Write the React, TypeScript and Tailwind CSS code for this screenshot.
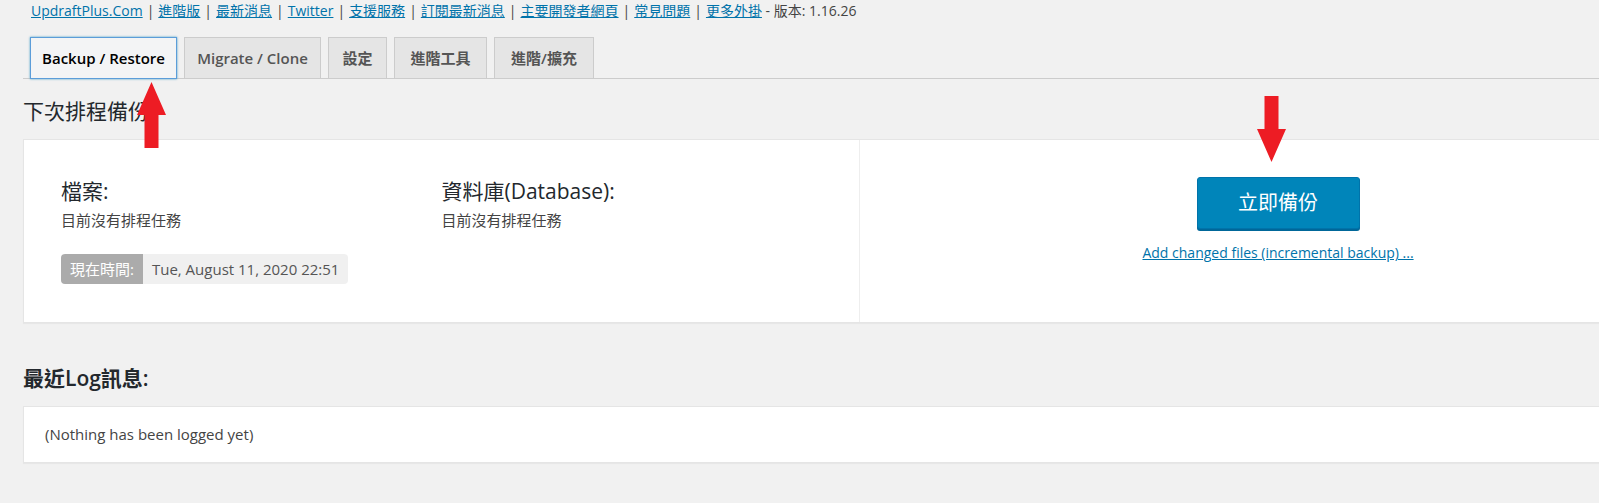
const FONT = "font-['Open_Sans','Noto_Sans_CJK_TC',sans-serif]";

const topLinks = [
  "UpdraftPlus.Com",
  "進階版",
  "最新消息",
  "Twitter",
  "支援服務",
  "訂閱最新消息",
  "主要開發者網頁",
  "常見問題",
  "更多外掛",
];

const tabs = [
  { label: "Backup / Restore", w: "w-[147px]", active: true },
  { label: "Migrate / Clone", w: "w-[137px]" },
  { label: "設定", w: "w-[59px]" },
  { label: "進階工具", w: "w-[93px]" },
  { label: "進階/擴充", w: "w-[100px]" },
];

function RedArrow({ up, className }: { up?: boolean; className: string }) {
  // 29 wide, shaft 15 wide, head 34 tall
  return (
    <svg
      className={className}
      width="29"
      height="66"
      viewBox="0 0 29 66"
      style={up ? undefined : { transform: "rotate(180deg)" }}
    >
      <path d="M14.5 0 L29 33 L21.5 33 L21.5 66 L7.5 66 L7.5 33 L0 33 Z" fill="#ed1c24" />
    </svg>
  );
}

export default function App() {
  return (
    <div className={`relative min-h-screen overflow-hidden bg-[#f1f1f1] text-[#444] ${FONT}`}>
      {/* plugin links */}
      <div className="pl-[31px] pt-0 text-[14px] leading-[22px] whitespace-nowrap">
        {topLinks.map((l, i) => (
          <span key={l}>
            {i > 0 && <span className="mx-[4px]">|</span>}
            <a href="#" className="text-[#0073aa] underline">
              {l}
            </a>
          </span>
        ))}
        <span> - 版本: 1.16.26</span>
      </div>

      {/* tabs */}
      <div className="mt-[15px] ml-[23px] flex gap-[7px] border-b border-[#ccc] pl-[7px]">
        {tabs.map((t) => (
          <div
            key={t.label}
            className={`-mb-px flex h-[42px] items-center justify-center border text-[15px] font-semibold ${t.w} ${
              t.active
                ? "border-[#5b9dd9] bg-[#f3f4f5] text-[#000] shadow-[0_0_2px_rgba(30,140,190,0.8)]"
                : "border-[#ccc] bg-[#e5e5e5] text-[#555]"
            }`}
          >
            {t.label}
          </div>
        ))}
      </div>

      <h2 className="mt-[17px] ml-[23px] text-[21px] leading-[30px] text-[#23282d]">下次排程備份</h2>

      {/* next scheduled backups */}
      <div className="mt-[13px] ml-[23px] flex h-[184px] w-[1674px] border border-[#e5e5e5] bg-white shadow-[0_1px_1px_rgba(0,0,0,0.04)]">
        <div className="w-[837px] border-r border-[#eee] px-[37px] pt-[37px]">
          <div className="grid grid-cols-2">
            <div>
              <h3 className="text-[21px] leading-[28px] text-[#23282d]">檔案:</h3>
              <p className="mt-[4px] text-[15px] leading-[22px]">目前沒有排程任務</p>
            </div>
            <div>
              <h3 className="text-[21px] leading-[28px] text-[#23282d]">資料庫(Database):</h3>
              <p className="mt-[4px] text-[15px] leading-[22px]">目前沒有排程任務</p>
            </div>
          </div>
          <div className="mt-[23px] flex h-[30px] w-fit overflow-hidden rounded-[4px] text-[15px]">
            <span className="flex items-center bg-[#ababab] px-[9px] text-white">現在時間:</span>
            <span className="flex items-center bg-[#f0f0f0] px-[9px] text-[#555]">
              Tue, August 11, 2020 22:51
            </span>
          </div>
        </div>
        <div className="flex w-[837px] flex-col items-center pt-[37px]">
          <button className="h-[52px] w-[163px] rounded-[3px] border border-[#0073aa] bg-[#0085ba] text-[20px] text-white shadow-[0_2px_0_#006799]">
            立即備份
          </button>
          <a href="#" className="mt-[13px] text-[14px] leading-[22px] text-[#0073aa] underline">
            Add changed files (incremental backup) ...
          </a>
        </div>
      </div>

      <h2 className="mt-[40px] ml-[23px] text-[21px] font-semibold leading-[30px] text-[#23282d]">
        最近Log訊息:
      </h2>

      <div className="mt-[13px] ml-[23px] flex h-[57px] w-[1674px] items-center border border-[#e5e5e5] bg-white px-[21px] text-[15px] shadow-[0_1px_1px_rgba(0,0,0,0.04)]">
        (Nothing has been logged yet)
      </div>

      <RedArrow up className="absolute left-[137px] top-[82px]" />
      <RedArrow className="absolute left-[1257px] top-[96px]" />
    </div>
  );
}
